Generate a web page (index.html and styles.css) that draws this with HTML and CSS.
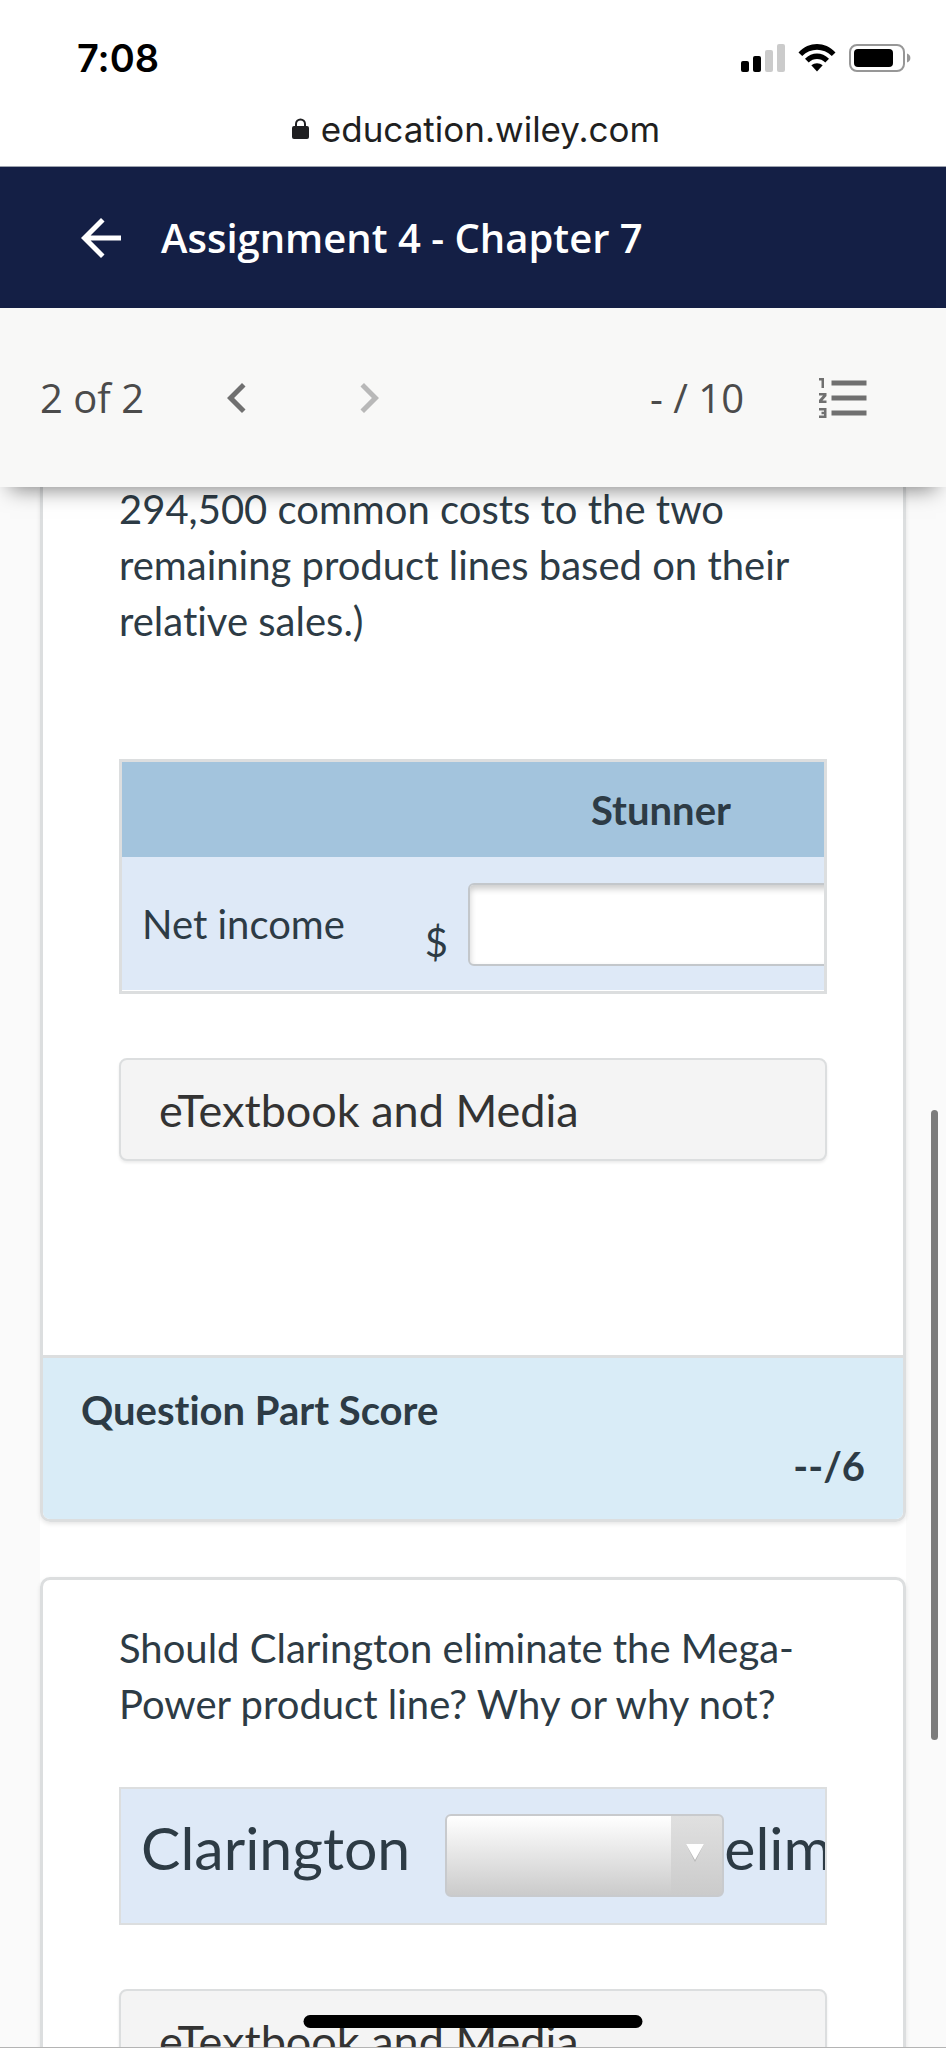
FILE: index.html
```html
<!DOCTYPE html>
<html lang="en">
    <head>
        <title>Assignment 4 - Chapter 7</title>
        <meta name="viewport" content="width=device-width, initial-scale=1" />
        <meta charset="utf-8" />

        <link rel="stylesheet" href="styles.css">
    </head>
    <body>

        <div class="browserBar">
            <div class="status">
                <span class="time">7:08</span>
                <div class="statusIcons">
                    <svg width="44" height="30" viewBox="0 0 44 30">
                        <rect x="0" y="18" width="8" height="11" rx="2"/>
                        <rect x="12" y="13" width="8" height="16" rx="2"/>
                        <rect x="24" y="7" width="8" height="22" rx="2" fill="#cbcbcb"/>
                        <rect x="36" y="1" width="8" height="28" rx="2" fill="#cbcbcb"/>
                    </svg>
                    <svg width="38" height="30" viewBox="0 0 38 30">
                        <path d="M0.5 9.5C11 -1.8 27 -1.8 37.5 9.5L33.8 13C25.5 4.500 12.500 4.500 4.200 13Z"/>
                        <path d="M7 15.800C14 8.600 24 8.600 31 15.800L27.300 19.400C22.500 14.800 15.500 14.800 10.700 19.400Z"/>
                        <path d="M13.300 22.300C16.600 19.500 21.400 19.500 24.700 22.300L19 28.500Z"/>
                    </svg>
                    <svg width="62" height="30" viewBox="0 0 62 30">
                        <rect x="1" y="2" width="54" height="26" rx="7" fill="none" stroke="#979797" stroke-width="2"/>
                        <rect x="5" y="6" width="39" height="18" rx="4"/>
                        <path d="M58 10.500C62.500 12 62.500 18 58 19.500Z" fill="#979797"/>
                    </svg>
                </div>
            </div>
            <div class="url">
                <svg width="17" height="22" viewBox="0 0 17 22">
                    <rect x="0" y="8" width="17" height="13" rx="2" fill="#1f1f21"/>
                    <path d="M4 9V6a4.500 4.500 0 0 1 9 0v3" fill="none" stroke="#1f1f21" stroke-width="2"/>
                </svg>
                <span>education.wiley.com</span>
            </div>
        </div>

        <header>
            <button type="button" class="icon" aria-label="Back">
                <svg viewBox="0 0 24 24"><path d="M20 11H7.830l5.590-5.590L12 4l-8 8 8 8 1.410-1.410L7.830 13H20v-2z"/></svg>
            </button>
            <h1>Assignment 4 - Chapter 7</h1>
        </header>

        <nav class="toolbar">
            <span>2 of 2</span>
            <button type="button" class="icon prev" aria-label="Previous question">
                <svg viewBox="0 0 24 24"><path d="M15.410 7.410L14 6l-6 6 6 6 1.410-1.410L10.830 12z"/></svg>
            </button>
            <button type="button" class="icon next" aria-label="Next question" disabled>
                <svg viewBox="0 0 24 24"><path d="M10 6L8.590 7.410 13.170 12l-4.580 4.590L10 18l6-6z"/></svg>
            </button>
            <span class="points">- / 10</span>
            <button type="button" class="icon list" aria-label="Question list">
                <svg viewBox="0 0 24 24">
                    <path d="M7 5v2h14V5H7zm0 14h14v-2H7v2zm0-6h14v-2H7v2z"/>
                    <path d="M2 4h2v4H3V5H2zM2 10h3v1.200L3.400 13H5v1H2v-1.200L3.600 11H2zM2 16h3v4H2v-1h2v-.5H3v-1h1V17H2z"/>
                </svg>
            </button>
        </nav>

        <main>
            <div class="assignment">
                <section class="card scrolled">
                    <div class="question">
                        <p>294,500 common costs to the two remaining product lines based on their relative sales.)</p>
                        <div class="tableWrap">
                            <table>
                                <thead>
                                    <tr>
                                        <th class="rowName"></th>
                                        <th class="currency"></th>
                                        <th class="amount" id="stunner">Stunner</th>
                                    </tr>
                                </thead>
                                <tbody>
                                    <tr>
                                        <td><label for="netIncome">Net income</label></td>
                                        <td class="dollar">$</td>
                                        <td class="field"><input type="text" id="netIncome" aria-describedby="stunner"></td>
                                    </tr>
                                </tbody>
                            </table>
                        </div>
                        <button type="button" class="media">eTextbook and Media</button>
                    </div>
                    <div class="score">
                        <div>Question Part Score</div>
                        <div class="scoreValue">--/6</div>
                    </div>
                </section>

                <section class="card">
                    <div class="question">
                        <p>Should Clarington eliminate the Mega-Power product line? Why or why not?</p>
                        <div class="sentence">
                            <label for="decision">Clarington</label>
                            <div class="dropdown">
                                <select id="decision">
                                    <option value=""></option>
                                    <option value="1">should</option>
                                    <option value="2">should not</option>
                                </select>
                                <svg width="18" height="18" viewBox="0 0 18 18"><path d="M0 0H18L9 18Z" fill="#b5b5b5"/><path d="M0 0H18L9 16Z" fill="#fff"/></svg>
                            </div>
                            <span>eliminate</span>
                        </div>
                        <button type="button" class="media">eTextbook and Media</button>
                    </div>
                </section>
            </div>
        </main>

        <div class="scrollThumb"></div>
        <div class="homeBar"></div>

    </body>
</html>
```

FILE: styles.css
```css
* {
    box-sizing: border-box;
}
html {
    font-family: Lato, sans-serif;
    font-variant-ligatures: none;
}
:root {
    --line: #dcdedf;
    --text: #2d3b45;
}
body {
    margin: 0;
    height: 100vh;
    display: flex;
    flex-direction: column;
    overflow: hidden;
    background: #fafafa;
    color: var(--text);
    font-size: 40px;
    line-height: 56px;
}
button, input, select {
    font: inherit;
    color: inherit;
    margin: 0;
}
svg {
    display: block;
}

/* phone status and address */
.browserBar {
    flex: none;
    background: #fff;
    padding-bottom: 12px;
    border-bottom: 1px solid #9da3ae;
    font-family: Inter, sans-serif;
}
.status {
    display: flex;
    justify-content: space-between;
    align-items: center;
    height: 104px;
    padding: 12px 35px 0 77px;
    color: #000;
}
.time {
    font-size: 38px;
    font-weight: 600;
}
.statusIcons {
    display: flex;
    gap: 13px;
}
.url {
    display: flex;
    justify-content: center;
    align-items: center;
    gap: 12px;
    padding-left: 6px;
    color: #1f1f21;
    font-size: 35px;
    line-height: 50px;
}

/* assignment header */
header {
    flex: none;
    display: flex;
    align-items: center;
    gap: 30px;
    height: 141px;
    padding: 0 71px;
    background: #141f45;
    color: #fff;
    font-family: "Open Sans", sans-serif;
}
h1 {
    margin: 0;
    font-size: 40px;
    font-weight: 600;
}
.icon {
    flex: none;
    width: 60px;
    height: 60px;
    padding: 0;
    border: 0;
    background: none;
}
.icon svg {
    width: 60px;
    height: 60px;
    fill: currentColor;
}
.toolbar {
    flex: none;
    position: relative;
    z-index: 1;
    display: flex;
    align-items: center;
    height: 179px;
    padding: 0 72px 0 40px;
    background: #f8f8f7;
    box-shadow: 0 12px 20px -10px rgba(0, 0, 0, .5);
    color: #4b4b4b;
    font-family: "Open Sans", sans-serif;
    font-size: 40px;
}
.toolbar .icon {
    color: #707070;
}
.toolbar .prev {
    margin-left: 63px;
}
.toolbar .next {
    margin-left: 72px;
    color: #b8b8b8;
}
.points {
    margin-left: auto;
}
.toolbar .list {
    margin-left: 70px;
}

/* question cards */
main {
    flex: 1;
    min-height: 0;
    overflow: hidden;
    border-bottom: 1px solid #b4b4b4;
}
.assignment {
    margin: 0 40px;
    background: #fff;
}
.card {
    margin-bottom: 55px;
    border: 3px solid var(--line);
    border-radius: 10px;
    box-shadow: 0 2px 4px rgba(0, 0, 0, .1);
    overflow: hidden;
}
.question {
    padding: 40px 76px 194px;
}
.scrolled {
    border-top: 0;
    border-radius: 0 0 10px 10px;
}
.scrolled .question {
    padding-top: 0;
    margin-top: -6px;
}
p {
    margin: 0 0 55px;
}
.scrolled p {
    margin-bottom: 110px;
}
.tableWrap {
    overflow: hidden;
    padding-bottom: 1px;
    border: 3px solid var(--line);
}
table {
    width: 732px;
    table-layout: fixed;
    border-collapse: collapse;
    background: #dee9f7;
}
th, td {
    padding: 0 20px;
    text-align: left;
}
th {
    height: 95px;
    background: #a3c4dd;
}
.rowName {
    width: 260px;
}
.currency {
    width: 86px;
}
th.amount {
    width: 386px;
    padding: 0;
    text-align: center;
}
.dollar {
    padding: 0 20px 20px 0;
    text-align: right;
    vertical-align: bottom;
}
.field {
    padding: 26px 0 24px;
}
input {
    display: block;
    width: 386px;
    height: 83px;
    padding: 0 12px;
    border: 2px solid #c3c7cb;
    border-radius: 6px;
    background: #fff;
    box-shadow: inset 0 4px 6px rgba(0, 0, 0, .2);
}
.media {
    display: block;
    width: 100%;
    height: 103px;
    margin-top: 64px;
    padding: 0 38px;
    border: 2px solid var(--line);
    border-radius: 8px;
    background: #f4f4f4;
    box-shadow: 0 2px 3px rgba(0, 0, 0, .08);
    color: #333;
    font-size: 45px;
    text-align: left;
}
.score {
    padding: 24px 38px 25px;
    border-top: 3px solid var(--line);
    background: #d9ecf7;
    font-weight: bold;
}
.scoreValue {
    text-align: right;
}

/* fill in sentence */
.sentence {
    display: flex;
    align-items: flex-start;
    overflow: hidden;
    padding: 25px 0 26px 20px;
    border: 2px solid var(--line);
    background: #dee9f7;
    font-size: 59px;
    line-height: 68px;
    white-space: nowrap;
}
.dropdown {
    flex: none;
    position: relative;
    margin-left: 35px;
}
.dropdown svg {
    position: absolute;
    right: 20px;
    top: 30px;
    pointer-events: none;
}
select {
    appearance: none;
    display: block;
    width: 279px;
    height: 83px;
    padding: 0 60px 0 12px;
    border: 2px solid #c8cacd;
    border-radius: 6px;
    background:
        linear-gradient(#e0e0e0, #cbcbcb) right / 51px 100% no-repeat,
        linear-gradient(#fff, #cbcbcb);
    font-size: 40px;
}

.scrollThumb {
    position: fixed;
    z-index: 2;
    right: 8px;
    top: 1110px;
    width: 7px;
    height: 630px;
    border-radius: 4px;
    background: #7c7c7c;
}
.homeBar {
    position: fixed;
    z-index: 2;
    left: 50%;
    bottom: 20px;
    width: 339px;
    height: 13px;
    border-radius: 7px;
    background: #000;
    transform: translateX(-50%);
}
```
